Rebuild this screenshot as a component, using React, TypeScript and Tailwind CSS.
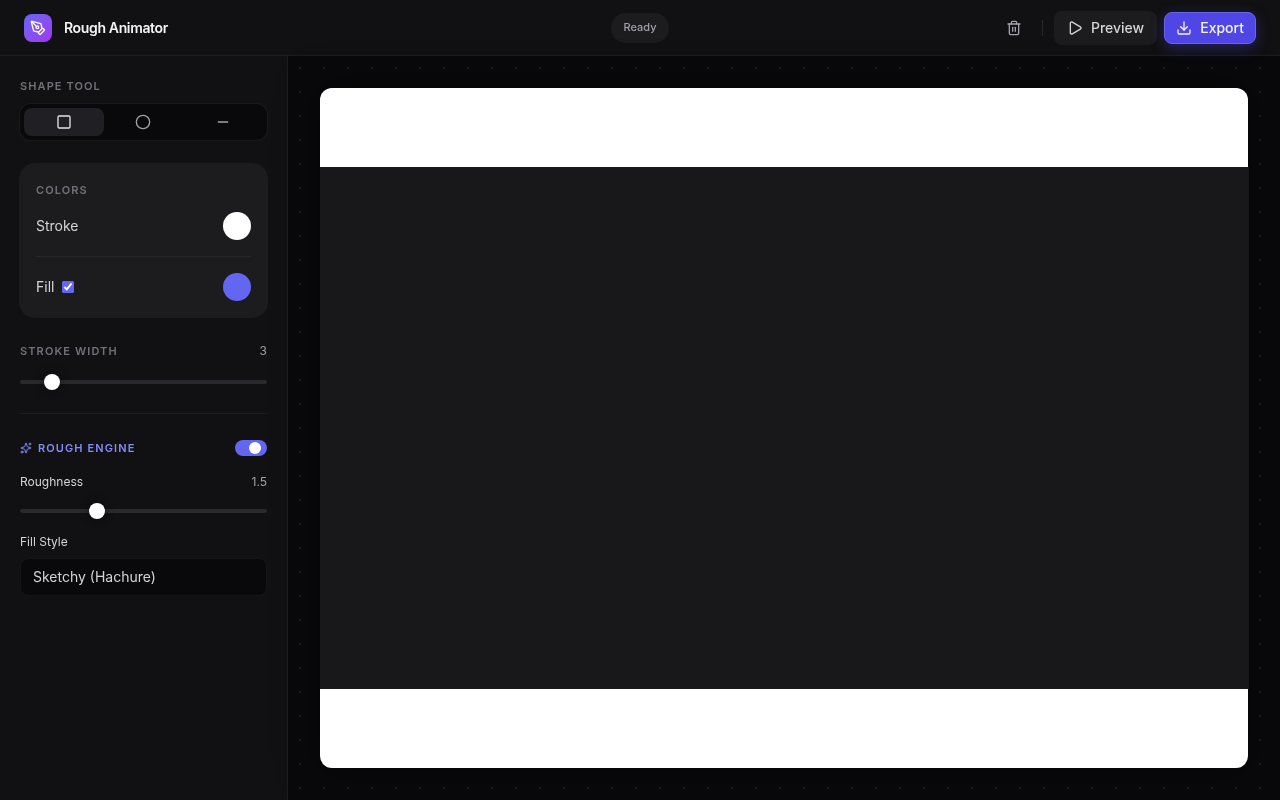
import { Circle, Download, Minus, PenTool, Play, Sparkles, Square, Trash2 } from "lucide-react";

function Slider({ percent }: { percent: number }) {
  return (
    <div className="relative h-1 w-full rounded-full bg-[#2a2a2e]">
      <div
        className="absolute top-1/2 h-4 w-4 -translate-x-1/2 -translate-y-1/2 rounded-full bg-white shadow-[0_0_8px_rgba(0,0,0,0.5)]"
        style={{ left: `${percent}%` }}
      />
    </div>
  );
}

export default function App() {
  return (
    <div className="flex h-screen w-full flex-col overflow-hidden bg-[#09090b] font-['Inter',sans-serif] text-white antialiased will-change-transform">
      <header className="flex h-14 shrink-0 items-center justify-between border-b border-[#27272a]/60 bg-[#111113] px-6">
        <div className="flex w-[300px] items-center gap-3">
          <div className="flex h-7 w-7 items-center justify-center rounded-lg bg-gradient-to-br from-[#6366f1] to-[#a033f0]">
            <PenTool size={16} strokeWidth={2} className="text-white" />
          </div>
          <span className="text-sm font-semibold tracking-tight text-[#f4f4f5]">Rough Animator</span>
        </div>
        <div className="flex h-[30px] w-[58px] items-center justify-center rounded-full bg-[#1c1c1f] text-[11px] font-medium text-[#a1a1aa]">Ready</div>
        <div className="flex w-[300px] items-center justify-end">
          <Trash2 size={16} strokeWidth={2} className="text-[#a1a1aa]" />
          <div className="ml-5 mr-[11px] h-4 w-px bg-[#27272a]" />
          <button className="mr-[7px] flex h-[34px] items-center gap-2 rounded-lg bg-[#1c1c1f] px-[13px] text-sm font-medium text-[#d4d4d8]">
            <Play size={16} strokeWidth={2} />
            Preview
          </button>
          <button className="flex h-8 items-center gap-2 rounded-lg border border-[#6366f1] bg-[#4f46e5] px-[11px] text-sm font-medium text-[#f4f4f5] shadow-[0_4px_14px_rgba(79,70,229,0.35)]">
            <Download size={16} strokeWidth={2} />
            Export
          </button>
        </div>
      </header>
      <div className="flex min-h-0 flex-1">
        <aside className="flex w-[288px] shrink-0 flex-col border-r border-[#27272a]/60 bg-[#111113] px-5 pt-[23px]">
          <div className="text-[11px] font-semibold leading-[14px] tracking-[0.1em] text-[#71717a]">SHAPE TOOL</div>
          <div className="-mx-px mt-[10px] flex h-[38px] items-center rounded-xl border border-[#27272a]/60 bg-[#09090b] px-[4px]">
            <div className="flex h-7 w-20 items-center justify-center rounded-lg bg-[#27272a]/80 text-[#e4e4e7]">
              <Square size={16} strokeWidth={2} />
            </div>
            <div className="flex h-7 w-20 items-center justify-center pr-px text-[#a1a1aa]">
              <Circle size={16} strokeWidth={2} />
            </div>
            <div className="flex h-7 w-20 items-center justify-center text-[#a1a1aa]">
              <Minus size={16} strokeWidth={2} />
            </div>
          </div>

          <section className="-mx-px mt-[22px] rounded-2xl bg-[#1c1c1e] px-[17px] pb-[17px] pt-[20px]">
            <div className="text-[11px] font-semibold leading-[14px] tracking-[0.1em] text-[#71717a]">COLORS</div>
            <div className="mt-[15px] flex items-center justify-between border-b border-[#27272a] pb-4">
              <span className="text-sm text-[#d4d4d8]">Stroke</span>
              <div className="h-7 w-7 rounded-full bg-white" />
            </div>
            <div className="mt-4 flex items-center justify-between">
              <label className="flex items-center gap-2 text-sm text-[#d4d4d8]">
                Fill
                <input type="checkbox" defaultChecked className="m-0 h-3 w-3 accent-[#6366f1]" />
              </label>
              <div className="h-7 w-7 rounded-full bg-[#6366f1]" />
            </div>
          </section>

          <div className="mt-[25px] flex items-center justify-between text-[11px] font-semibold leading-[14px]">
            <span className="tracking-[0.1em] text-[#71717a]">STROKE WIDTH</span>
            <span className="text-xs font-normal text-[#a1a1aa]">3</span>
          </div>
          <div className="mt-[21px]">
            <Slider percent={13} />
          </div>
          <div className="mt-[29px] h-px bg-[#27272a]/60" />

          <div className="mt-[26px] flex items-center justify-between">
            <div className="flex items-center gap-[6px] text-[11px] font-semibold tracking-[0.1em] text-[#818cf8]">
              <Sparkles size={12} strokeWidth={2} />
              ROUGH ENGINE
            </div>
            <div className="flex h-4 w-8 items-center justify-end rounded-full bg-[#6366f1] px-[6px]">
              <div className="h-3 w-3 shrink-0 rounded-full bg-white" />
            </div>
          </div>
          <div className="mt-[17px] flex items-center justify-between text-xs leading-4">
            <span className="text-[#d4d4d8]">Roughness</span>
            <span className="text-[#a1a1aa]">1.5</span>
          </div>
          <div className="mt-[19px]">
            <Slider percent={31.2} />
          </div>
          <div className="mt-[21px] text-xs leading-4 text-[#d4d4d8]">Fill Style</div>
          <div className="mt-2 flex h-[38px] items-center rounded-lg border border-[#27272a]/40 bg-[#09090b] px-3 text-sm text-[#d4d4d8]">
            Sketchy (Hachure)
          </div>
        </aside>

        <main className="relative flex min-w-0 flex-1 bg-[radial-gradient(circle,#1f1f22_1px,transparent_1px)] bg-[length:24px_24px] p-8">
          <div className="flex h-[680px] w-[928px] items-center rounded-xl bg-white shadow-[0_0_40px_rgba(0,0,0,0.5)]">
            <div className="h-[522px] w-[929px] shrink-0 bg-[#18181b]" />
          </div>
        </main>
      </div>
    </div>
  );
}
